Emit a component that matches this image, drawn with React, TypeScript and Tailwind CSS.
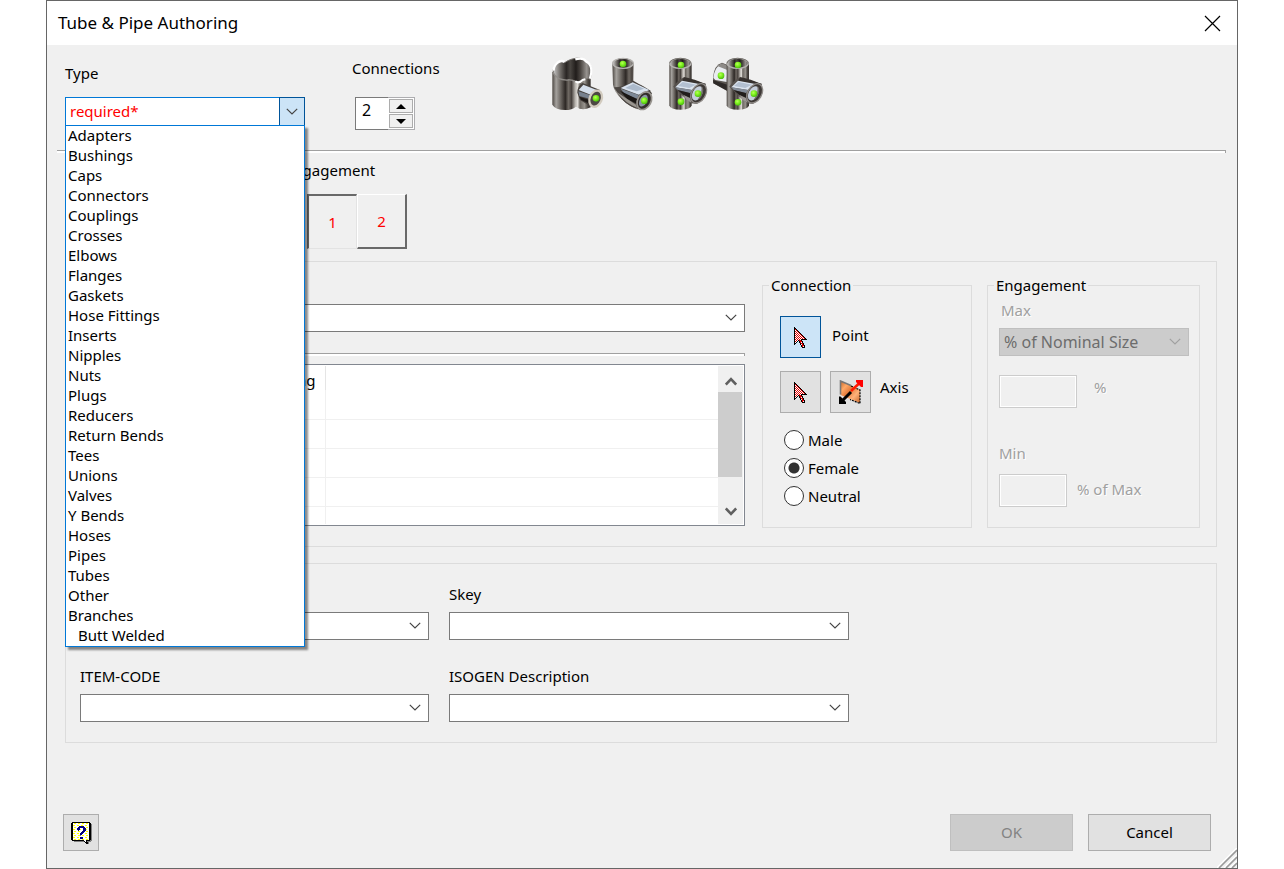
import { useState } from 'react';
import type { ReactNode } from 'react';

const FITTING_TYPES = [
  'Adapters', 'Bushings', 'Caps', 'Connectors', 'Couplings', 'Crosses', 'Elbows',
  'Flanges', 'Gaskets', 'Hose Fittings', 'Inserts', 'Nipples', 'Nuts', 'Plugs',
  'Reducers', 'Return Bends', 'Tees', 'Unions', 'Valves', 'Y Bends', 'Hoses',
  'Pipes', 'Tubes', 'Other', 'Branches',
];

const BRANCH_TYPES = ['Butt Welded'];

const GENDERS = ['Male', 'Female', 'Neutral'];

// k = black, r = red, * = red and white checker
const ARROW_PIXELS = [
  'k............',
  'kk...........',
  'k*k..........',
  'k**k.........',
  'k***k........',
  'k****k.......',
  'k*****k......',
  'k******k.....',
  'k*******k....',
  'k********k...',
  'k*********k..',
  'k**********k.',
  'k******kkkkkk',
  'k***kr*k.....',
  'k**k.krrk....',
  'k*k..kr*k....',
  'kk....krrk...',
  'k.....k*rk...',
  '.......krrk..',
  '.......kr*k..',
  '........kkk..',
];

// k = black, b = navy, y = yellow, w = white, g = shadow
const HELP_PIXELS = [
  '.kkkkkkkkkkkkkkkkkk..',
  'kkwyywwyywwyywwyywkk.',
  'kkwwwwwwwwwwwwwwwwkkg',
  'kkyywwyywwyywwyywwkkg',
  'kkwwwwwwbbbbbwwwwwkkg',
  'kkwyywwbbbbbbbwyywkkg',
  'kkwwwwbbbwwwbbbwwwkkg',
  'kkyywwbbbywwbbbywwkkg',
  'kkwwwwwbwwwwbbbwwwkkg',
  'kkwyywwyywwbbbwyywkkg',
  'kkwwwwwwwwbbbwwwwwkkg',
  'kkyywwyywbbbwwyywwkkg',
  'kkwwwwwwwbbwwwwwwwkkg',
  'kkwyywwyygwyywwyywkkg',
  'kkwwwwwwwwwwwwwwwwkkg',
  'kkyywwyywbbbwwyywwkkg',
  'kkwwwwwwwbbbwwwwwwkkg',
  'kkwyywwyywwyywwyywkkg',
  '.kkkkkkkkkkkkwwkkkkgg',
  '...ggggggggggkwkgggg.',
  '..............kkkg...',
  '...............kkg...',
];

const PIXEL_COLORS: Record<string, string> = {
  k: '#000000',
  r: '#e00000',
  b: '#000080',
  y: '#ffff00',
  w: '#ffffff',
  g: '#808080',
};

function Pixels({ rows }: { rows: string[] }) {
  return (
    <svg width={rows[0].length} height={rows.length} viewBox={`0 0 ${rows[0].length} ${rows.length}`} shapeRendering="crispEdges">
      {rows.map((row, y) =>
        row.split('').map((cell, x) => {
          if (cell === '.') return null;
          const key = cell === '*' ? ((x + y) % 2 ? 'r' : 'w') : cell;
          return <rect key={`${x}-${y}`} x={x} y={y} width="1" height="1" fill={PIXEL_COLORS[key]} />;
        })
      )}
    </svg>
  );
}

function Chevron({ className = '' }: { className?: string }) {
  return (
    <svg className={className} width="12" height="7" viewBox="0 0 12 7" fill="none" stroke="currentColor" strokeWidth="1.2">
      <path d="M0.8 0.8 6 6 11.2 0.8" />
    </svg>
  );
}

interface ComboProps {
  id?: string;
  label?: string;
  value?: string;
  disabled?: boolean;
}

function Combo({ id, label, value = '', disabled = false }: ComboProps) {
  return (
    <div className="relative">
      <select
        id={id}
        aria-label={label}
        disabled={disabled}
        className="block h-7 w-full appearance-none border border-[#7a7a7a] bg-white px-1 text-base leading-5 disabled:border-[#bfbfbf] disabled:bg-[#cccccc] disabled:text-[#6d6d6d] disabled:opacity-100"
      >
        <option>{value}</option>
      </select>
      <Chevron className={`pointer-events-none absolute top-[10px] right-2 ${disabled ? 'text-[#a0a0a0]' : 'text-[#444444]'}`} />
    </div>
  );
}

function Field({ id, label }: { id: string; label: string }) {
  return (
    <div>
      <label htmlFor={id} className="mb-2 block leading-5">{label}</label>
      <Combo id={id} />
    </div>
  );
}

function Etched() {
  return <div className="h-[3px] border-t border-r border-t-[#a0a0a0] border-r-[#a0a0a0] bg-white" />;
}

function Ball({ x, y }: { x: number; y: number }) {
  return <circle cx={x} cy={y} r="10" fill="url(#ball)" />;
}

// vertical tube segment with an open top rim
function Tube({ x, top, bottom }: { x: number; top: number; bottom: number }) {
  return (
    <>
      <path d={`M${x} ${top} V${bottom} A33 13 0 0 0 ${x + 67} ${bottom} V${top} Z`} fill="url(#steel)" />
      <ellipse cx={x + 33} cy={top} rx="32" ry="15" fill="url(#bore)" stroke="#b5b3b0" strokeWidth="4" />
      <path d={`M${x + 1} ${top} A32 15 0 0 1 ${x + 65} ${top}`} fill="none" stroke="#77746f" strokeWidth="3" />
    </>
  );
}

// side outlet pointing down and to the right
function Outlet({ x, y }: { x: number; y: number }) {
  return (
    <g transform={`translate(${x} ${y})`}>
      <path d="M-74 -20 Q-62 -38 -42 -48 L24 -28 L-2 32 L-20 30 L-50 4 Z" fill="#57524e" />
      <path d="M-42 -48 Q-34 -50 24 -28 L8 -26 L-48 -38 Z" fill="#37322f" />
      <path d="M-68 -18 L-48 -38 L4 -28 L-18 -10 Z" fill="#dbe4ef" />
      <path d="M-60 -22 L-46 -34 L-6 -26 L-26 -16 Z" fill="#b3c0d1" />
      <path d="M-68 -18 L-18 -10 L-24 0 L-60 -10 Z" fill="#838c99" />
      <path d="M-62 -10 L-24 -1 L-24 14 L-44 4 Z" fill="#221e1c" />
      <path d="M-44 5 L-24 14 L-20 28 L-34 20 Z" fill="#9b9793" />
      <ellipse cx="2" cy="0" rx="21" ry="31" transform="rotate(30 2 0)" fill="#3d3835" stroke="#8f8b88" strokeWidth="4" />
      <ellipse cx="-2" cy="0" rx="14" ry="23" transform="rotate(28 -2 0)" fill="#c5cedb" />
      <path d="M10 -22 Q22 -14 10 10 Q4 18 0 18 Q14 -2 10 -22 Z" fill="#6f6a66" />
      <Ball x={0} y={1} />
    </g>
  );
}

function FittingPreviews() {
  return (
    <svg width="213" height="56" viewBox="33 18 639 168" role="img" aria-label="Fitting previews">
      <defs>
        <linearGradient id="steel">
          <stop offset="0" stopColor="#4d4843" />
          <stop offset="0.1" stopColor="#a5a29e" />
          <stop offset="0.22" stopColor="#6b6661" />
          <stop offset="0.34" stopColor="#2d2825" />
          <stop offset="0.42" stopColor="#6f6963" />
          <stop offset="0.5" stopColor="#47413d" />
          <stop offset="0.6" stopColor="#b9b5af" />
          <stop offset="0.66" stopColor="#e0ddd8" />
          <stop offset="0.72" stopColor="#6c6761" />
          <stop offset="0.84" stopColor="#97938d" />
          <stop offset="0.93" stopColor="#4a4540" />
          <stop offset="1" stopColor="#36312e" />
        </linearGradient>
        <linearGradient id="bore">
          <stop offset="0" stopColor="#d0d0d0" />
          <stop offset="0.18" stopColor="#77736f" />
          <stop offset="0.35" stopColor="#2a2624" />
          <stop offset="0.45" stopColor="#4a4642" />
          <stop offset="0.6" stopColor="#211d1b" />
          <stop offset="0.72" stopColor="#4b4642" />
          <stop offset="0.88" stopColor="#989490" />
          <stop offset="1" stopColor="#4d4946" />
        </linearGradient>
        <radialGradient id="ball" cx="0.4" cy="0.35" r="0.65">
          <stop offset="0" stopColor="#b8ff5a" />
          <stop offset="0.5" stopColor="#7df01f" />
          <stop offset="1" stopColor="#4cbc10" />
        </radialGradient>
      </defs>

      {/* saddle branch */}
      <path d="M37 66 V164 Q46 180 76 180 Q96 180 108 170 Q126 184 152 172 V46 Z" fill="url(#steel)" />
      <path d="M39 66 C34 44 60 24 76 36 C96 22 128 20 138 34 C158 40 156 72 150 88 C138 82 124 88 120 97 C108 98 100 84 84 88 Q54 92 39 66 Z" fill="url(#bore)" />
      <path d="M40 68 C36 46 60 26 76 37 C96 22 128 20 138 34 C158 40 156 72 150 90" fill="none" stroke="#77736f" strokeWidth="3" />
      <path d="M41 62 C40 44 60 26 74 36 M106 28 Q130 22 138 34 C156 42 156 66 150 86" fill="none" stroke="#ffffff" strokeWidth="7" />
      <path d="M39 68 Q52 92 84 90 C100 88 108 100 120 96" fill="none" stroke="#8f8c88" strokeWidth="4" />
      <path d="M106 94 Q116 102 128 90 L136 88" fill="none" stroke="#ffffff" strokeWidth="6" />
      <path d="M112 128 Q112 108 128 99 L180 120 L164 172 L146 166 L120 150 Z" fill="#47423e" />
      <path d="M116 120 L130 104 L172 121 L152 134 Z" fill="#d5dfeb" />
      <path d="M115 124 L152 136 L148 146 L118 138 Z" fill="#77818e" />
      <path d="M118 140 L148 150 L150 162 L124 150 Z" fill="#1f1b19" />
      <ellipse cx="167" cy="146" rx="18" ry="25" transform="rotate(22 167 146)" fill="#4d4844" stroke="#d2cbbf" strokeWidth="7" />
      <Ball x={168} y={145} />

      {/* elbow */}
      <path d="M217 40 L219 104 Q222 126 246 148 Q272 174 302 181 L336 130 Q326 112 280 96 L281 40 Z" fill="url(#steel)" />
      <path d="M222 112 Q250 112 280 92 L332 122 L304 180 Q268 172 244 146 Z" fill="#4b4642" />
      <path d="M242 114 L278 97 L328 120 L296 134 Z" fill="#d8e2ee" />
      <path d="M256 114 L280 101 L312 116 L290 124 Z" fill="#acbacb" />
      <path d="M242 116 L296 135 L292 146 L254 132 Z" fill="#7d8896" />
      <path d="M240 122 L292 148 L292 162 L262 148 Z" fill="#191614" />
      <path d="M230 126 L288 164 L292 174 Q256 160 230 126 Z" fill="#99958f" />
      <ellipse cx="249" cy="40" rx="31" ry="15" fill="url(#bore)" stroke="#b5b3b0" strokeWidth="4" />
      <ellipse cx="313" cy="152" rx="20" ry="28" transform="rotate(28 313 152)" fill="#332e2b" stroke="#98948f" strokeWidth="5" />
      <ellipse cx="310" cy="152" rx="11" ry="19" transform="rotate(28 310 152)" fill="#8b96a4" />
      <Ball x={249} y={42} />
      <Ball x={313} y={152} />

      {/* tee */}
      <Tube x={388} top={40} bottom={166} />
      <Outlet x={474} y={130} />
      <Ball x={423} y={45} />
      <Ball x={423} y={155} />

      {/* cross */}
      <path d="M519 84 Q522 44 546 38 L580 52 L584 134 L560 122 L520 100 Z" fill="#5a5550" />
      <path d="M520 84 Q524 50 544 42 L562 52 L560 96 L526 90 Z" fill="#e9ecf0" />
      <path d="M532 48 L546 40 L564 48 L562 60 Z" fill="#8e8b88" />
      <path d="M519 90 L562 104 V122 L520 100 Z" fill="#2e2a28" />
      <Tube x={560} top={40} bottom={166} />
      <Outlet x={642} y={130} />
      <Ball x={543} y={77} />
      <Ball x={594} y={45} />
      <Ball x={594} y={157} />
    </svg>
  );
}

function AxisIcon() {
  return (
    <svg width="24" height="24" viewBox="0 0 24 24">
      <defs>
        <linearGradient id="plane" x1="0" y1="0" x2="1" y2="1">
          <stop offset="0" stopColor="#c4682b" />
          <stop offset="0.25" stopColor="#ffa866" />
          <stop offset="0.45" stopColor="#e37b3c" />
          <stop offset="0.7" stopColor="#ffb27a" />
          <stop offset="1" stopColor="#c5662a" />
        </linearGradient>
      </defs>
      <path d="M1.5 1 V15 L21 23 V10 L11 5 Z" fill="url(#plane)" />
      <path d="M1.5 14.5 V1 L12 5.5" fill="none" stroke="#777777" strokeWidth="1.6" />
      <path d="M12 6 L21 10 V23.5 L11 19.5" fill="none" stroke="#000000" strokeWidth="1.2" strokeDasharray="2 1" />
      <path d="M12 11 L20 3.5" stroke="#ff1a00" strokeWidth="2.6" />
      <path d="M17 0 H24 V7 H22 L17 2 Z" fill="#ff0000" />
      <path d="M12 12 L4 20" stroke="#000000" strokeWidth="3" />
      <path d="M0 16.5 H1.5 L7 22 V24 H0 Z" fill="#000000" />
    </svg>
  );
}

interface ToolButtonProps {
  label: string;
  active?: boolean;
  children: ReactNode;
}

function ToolButton({ label, active = false, children }: ToolButtonProps) {
  return (
    <button
      type="button"
      aria-label={label}
      aria-pressed={active}
      className={`flex h-[42px] w-[41px] items-center justify-center border ${
        active ? 'border-[#005499] bg-[#cce4f7]' : 'border-[#adadad] bg-[#e1e1e1]'
      }`}
    >
      {children}
    </button>
  );
}

function TypeCombo() {
  const [type, setType] = useState('required*');
  const [open, setOpen] = useState(true);

  const choose = (name: string) => {
    setType(name);
    setOpen(false);
  };

  return (
    <div className="relative z-10 mt-[14px]">
      <div className="flex h-[29px]">
        <input
          id="type"
          role="combobox"
          aria-expanded={open}
          aria-controls="type-list"
          readOnly
          value={type}
          className="min-w-0 flex-1 border border-r-0 border-[#0078d7] bg-white px-1 text-[15px] text-[#ff0000] outline-none"
        />
        <button
          type="button"
          aria-label="Open type list"
          onClick={() => setOpen(!open)}
          className="flex w-[26px] items-center justify-center border border-[#005499] bg-[#cce4f7] text-[#444444]"
        >
          <Chevron />
        </button>
      </div>
      {open && (
        <ul
          id="type-list"
          role="listbox"
          aria-label="Type"
          className="absolute top-7 left-0 w-full border border-[#0078d7] bg-white shadow-[3px_3px_2px_rgba(0,0,0,0.45)]"
        >
          {FITTING_TYPES.map((name) => (
            <li key={name} role="option" aria-selected={name === type} onClick={() => choose(name)} className="h-5 px-[2px] leading-[18px]">
              {name}
            </li>
          ))}
          {/* Branch sub types are indented below their parent */}
          {BRANCH_TYPES.map((name) => (
            <li key={name} role="option" aria-selected={name === type} onClick={() => choose(name)} className="h-5 px-3 leading-[18px]">
              {name}
            </li>
          ))}
        </ul>
      )}
    </div>
  );
}

function ConnectionCount() {
  const [count, setCount] = useState(2);

  return (
    <div className="mt-[19px] ml-[3px] flex h-[33px] w-[60px]">
      <input
        id="connections"
        value={count}
        readOnly
        className="w-[33px] border border-r-0 border-[#7a7a7a] bg-white px-[6px] pb-2 text-base outline-none"
      />
      <div className="flex flex-1 flex-col gap-px border border-l-0 border-[#adadb0] bg-white p-px">
        <button type="button" aria-label="More" onClick={() => setCount(count + 1)} className="flex flex-1 items-center justify-center border border-[#acacac] bg-[#f0f0f0]">
          <svg width="10" height="5" viewBox="0 0 10 5"><path d="M0 5 L5 0 L10 5Z" /></svg>
        </button>
        <button type="button" aria-label="Fewer" onClick={() => setCount(Math.max(1, count - 1))} className="flex flex-1 items-center justify-center border border-[#acacac] bg-[#f0f0f0]">
          <svg width="10" height="5" viewBox="0 0 10 5"><path d="M0 0 L5 5 L10 0Z" /></svg>
        </button>
      </div>
    </div>
  );
}

function MappingTable() {
  return (
    <div className="mt-2 flex h-[162px] overflow-hidden border border-[#828790] bg-white p-px">
      <div className="min-w-0 flex-1 overflow-hidden">
        <table className="w-full table-fixed border-collapse">
          <thead>
            <tr className="h-6">
              <th scope="col" className="w-[243px] border-r border-[#e5e5e5] pt-1 pr-[9px] text-right leading-5 font-normal">Mapping</th>
              <td />
            </tr>
          </thead>
          <tbody>
            {[0, 1, 2, 3, 4].map((row) => (
              <tr key={row} className="h-[29px] border-b border-[#f0f0f0]">
                <td className="border-r border-[#f0f0f0]" />
                <td />
              </tr>
            ))}
          </tbody>
        </table>
      </div>
      <div className="flex w-[25px] flex-col bg-[#f0f0f0] text-[#606060]">
        <button type="button" aria-label="Scroll up" className="flex h-[26px] items-center justify-center pt-1">
          <svg width="12" height="9" viewBox="0 0 12 9" fill="none" stroke="currentColor" strokeWidth="2.6"><path d="M0.8 7.6 6 2.2 11.2 7.6" /></svg>
        </button>
        <div className="mr-px h-[85px] bg-[#cdcdcd]" />
        <button type="button" aria-label="Scroll down" className="mt-auto flex h-[26px] items-center justify-center">
          <svg width="12" height="9" viewBox="0 0 12 9" fill="none" stroke="currentColor" strokeWidth="2.6"><path d="M0.8 1.4 6 6.8 11.2 1.4" /></svg>
        </button>
      </div>
    </div>
  );
}

function ConnectionGroup() {
  const [gender, setGender] = useState('Female');

  return (
    <fieldset className="w-[210px] shrink-0 border border-[#dcdcdc]">
      <legend className="ml-[6px] px-[2px] leading-5">Connection</legend>
      <div className="flex gap-[11px] px-[17px] pt-[21px]">
        <ToolButton label="Point" active><Pixels rows={ARROW_PIXELS} /></ToolButton>
        <span className="pt-[9px] leading-5">Point</span>
      </div>
      <div className="flex gap-[9px] px-[17px] pt-[13px]">
        <ToolButton label="Pick axis"><Pixels rows={ARROW_PIXELS} /></ToolButton>
        <ToolButton label="Flip axis"><AxisIcon /></ToolButton>
        <span className="pt-[6px] leading-5">Axis</span>
      </div>
      <div className="flex flex-col gap-2 px-[21px] pt-[17px]">
        {GENDERS.map((name) => (
          <label key={name} className="flex items-center gap-1 leading-5">
            <input
              type="radio"
              name="gender"
              value={name}
              checked={gender === name}
              onChange={() => setGender(name)}
              className="size-5 appearance-none rounded-full border border-[#333333] bg-white checked:bg-[radial-gradient(circle,#333333_5px,#ffffff_6px)]"
            />
            {name}
          </label>
        ))}
      </div>
    </fieldset>
  );
}

function EngagementGroup() {
  return (
    <fieldset disabled className="w-[213px] shrink-0 border border-[#dcdcdc] text-[#a0a0a0]">
      <legend className="ml-[6px] px-[2px] leading-5 text-black">Engagement</legend>
      <div className="pt-[5px] pr-[10px] pb-5 pl-[11px] [text-shadow:1px_1px_0_#ffffff]">
        <label htmlFor="max-unit" className="mb-2 block px-[2px] leading-5">Max</label>
        <div className="[text-shadow:none]">
          <Combo id="max-unit" value="% of Nominal Size" disabled />
        </div>
        <div className="mt-[19px] flex gap-[17px]">
          <input id="max" aria-label="Max" disabled className="h-[33px] w-[78px] border border-[#cccccc] shadow-[inset_0_0_0_1px_#ffffff]" />
          <label htmlFor="max" className="pt-[2px] leading-5">%</label>
        </div>
        <div className="mt-[35px] leading-5">Min</div>
        <div className="mt-[11px] flex gap-[10px]">
          <input id="min" aria-label="Min" disabled className="h-[33px] w-[68px] border border-[#cccccc] shadow-[inset_0_0_0_1px_#ffffff]" />
          <label htmlFor="min" className="pt-[5px] leading-5">% of Max</label>
        </div>
      </div>
    </fieldset>
  );
}

export default function App() {
  const [tab, setTab] = useState(1);

  return (
    <div className="bg-white px-[46px] font-['Noto_Sans',sans-serif] text-[15px] text-black">
      <div role="dialog" aria-labelledby="dialog-title" className="relative flex min-h-screen flex-col border border-[#666666] bg-[#f0f0f0]">
        <header className="flex h-11 items-center justify-between bg-white pr-4 pl-[11px]">
          <h1 id="dialog-title" className="text-[17px] leading-6">Tube &amp; Pipe Authoring</h1>
          <button type="button" aria-label="Close">
            <svg width="17" height="17" viewBox="0 0 17 17" stroke="#000000" strokeWidth="1.2"><path d="M1 1 16 16M16 1 1 16" /></svg>
          </button>
        </header>

        <div className="flex h-[105px] items-start pl-[18px]">
          <div className="w-[240px] pt-[18px]">
            <label htmlFor="type" className="block leading-5">Type</label>
            <TypeCombo />
          </div>
          <div className="ml-[47px] w-[199px] pt-[13px]">
            <label htmlFor="connections" className="block leading-5">Connections</label>
            <ConnectionCount />
          </div>
          <div className="pt-[11px]">
            <FittingPreviews />
          </div>
        </div>

        <div className="mr-[11px] ml-[10px]"><Etched /></div>

        <div className="pt-[7px] pb-3 pl-[238px]">
          <div className="leading-5">Engagement</div>
          <div className="mt-[14px] flex pl-[22px]">
            {[1, 2].map((n) => (
              <button
                key={n}
                type="button"
                onClick={() => setTab(n)}
                className={`h-[55px] w-[50px] text-[#ff0000] ${
                  tab === n
                    ? 'border-t-2 border-r border-b border-l-2 border-[#e3e3e3] border-t-[#696969] border-l-[#696969]'
                    : 'border-t border-r-2 border-b-2 border-l border-white border-r-[#696969] border-b-[#696969]'
                }`}
              >
                {n}
              </button>
            ))}
          </div>
        </div>

        <section className="mr-5 ml-[18px] flex gap-[17px] border border-[#dcdcdc] pt-[13px] pr-4 pb-[18px] pl-[14px]">
          <div className="min-w-0 flex-1 pt-[29px]">
            <Combo label="End treatment" />
            <div className="mt-[21px]"><Etched /></div>
            <MappingTable />
          </div>
          <div className="flex gap-[15px]">
            <ConnectionGroup />
            <EngagementGroup />
          </div>
        </section>

        <section className="mt-4 mr-5 ml-[18px] grid grid-cols-[349px_400px] gap-x-5 gap-y-[26px] border border-[#dcdcdc] px-[14px] pt-5 pb-5">
          <div className="pt-7"><Combo label="Material" /></div>
          <Field id="skey" label="Skey" />
          <Field id="item-code" label="ITEM-CODE" />
          <Field id="isogen" label="ISOGEN Description" />
        </section>

        <footer className="mt-auto flex items-center justify-between pr-[26px] pb-[17px] pl-4">
          <button type="button" aria-label="Help" className="flex h-[37px] w-9 items-center justify-center border border-[#adadad] bg-[#e1e1e1]">
            <Pixels rows={HELP_PIXELS} />
          </button>
          <div className="flex gap-[15px]">
            <button type="button" disabled className="h-[37px] w-[123px] border border-[#bfbfbf] bg-[#cccccc] text-[#838383]">OK</button>
            <button type="button" className="h-[37px] w-[123px] border border-[#adadad] bg-[#e1e1e1]">Cancel</button>
          </div>
        </footer>

        {/* resize grip */}
        <svg className="absolute right-0 bottom-0" width="20" height="20" viewBox="0 0 20 20" strokeWidth="1.6">
          <path d="M0 20 20 0M7 20 20 7M13 20 20 13" stroke="#ffffff" />
          <path d="M2 20 20 2M9 20 20 9M15 20 20 15" stroke="#9a9a9a" />
        </svg>
      </div>
    </div>
  );
}
